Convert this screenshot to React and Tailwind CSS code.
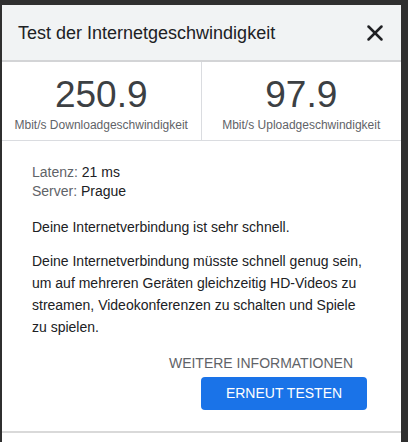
import { X } from 'lucide-react'

const font = { fontFamily: '"Liberation Sans", Arial, sans-serif' }

function Stat({ value, label, border }) {
  return (
    <div className={`flex flex-col items-center pt-[14px] h-[78px] ${border ? 'border-r border-[#dadce0]' : ''}`}>
      <div className="text-[37px] leading-[38px] text-[#3c4043]">{value}</div>
      <div className="mt-[4px] text-[12px] leading-[14px] text-[#5f6368]">{label}</div>
    </div>
  )
}

export default function App() {
  return (
    <div className="w-[408px] h-[442px] bg-[#2f2f2f] pt-[5px] pl-[2px] pr-[7px] overflow-hidden" style={font}>
      <div className="bg-white h-[460px]">
        <div className="h-[57px] bg-[#f1f3f4] border-b-2 border-[#d3d4d6] flex items-center justify-between pl-[16px] pr-[13px]">
          <h1 className="text-[18px] text-[#202124] pt-[2px]">Test der Internetgeschwindigkeit</h1>
          <X className="w-[26px] h-[26px] text-[#202124]" strokeWidth={2.3} />
        </div>

        <div className="grid grid-cols-2 border-b border-[#dadce0]">
          <Stat value="250.9" label="Mbit/s Downloadgeschwindigkeit" border />
          <Stat value="97.9" label="Mbit/s Uploadgeschwindigkeit" />
        </div>

        <div className="pl-[30px] pr-[34px] pt-[22px] text-[14px] text-[#202124]">
          <div className="leading-[19px]">
            <div><span className="text-[#5f6368]">Latenz:</span> 21 ms</div>
            <div><span className="text-[#5f6368]">Server:</span> Prague</div>
          </div>
          <p className="mt-[15px] leading-[22px]">Deine Internetverbindung ist sehr schnell.</p>
          <p className="mt-[12px] leading-[22px]">
            Deine Internetverbindung müsste schnell genug sein, um auf mehreren Geräten gleichzeitig HD-Videos zu streamen, Videokonferenzen zu schalten und Spiele zu spielen.
          </p>
          <div className="flex flex-col items-end mt-[16px]">
            <button className="text-[14px] leading-[18px] text-[#5f6368] uppercase mr-[14px]">Weitere Informationen</button>
            <button className="mt-[5px] w-[166px] h-[33px] rounded-[4px] bg-[#1a73e8] text-white text-[14px] uppercase">
              Erneut testen
            </button>
          </div>
        </div>
        <div className="mt-[21px] border-t-2 border-[#d9d9d9]" />
      </div>
    </div>
  )
}
